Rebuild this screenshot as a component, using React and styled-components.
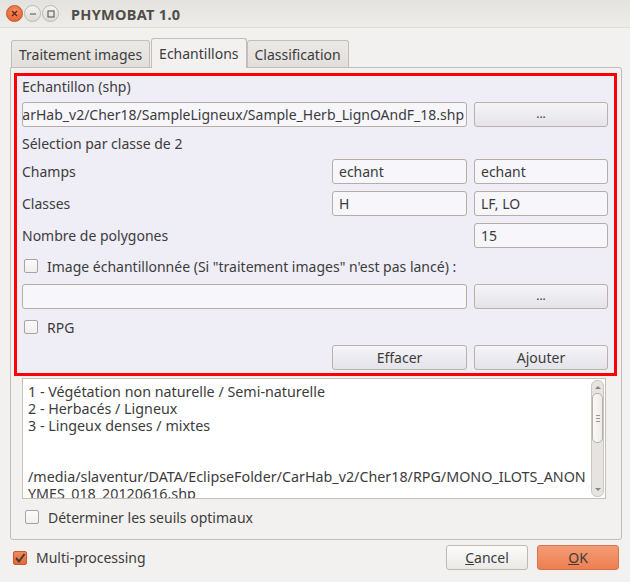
import styled, { createGlobalStyle, css } from "styled-components";

const Global = createGlobalStyle`
  html, body { margin: 0; padding: 0; background: #f2f1f0; }
  body { font-family: "Noto Sans", "DejaVu Sans", sans-serif; font-size: 14px; color: #3c3c3c; }
  * { box-sizing: border-box; }
`;

const Window = styled.div`
  width: 630px;
  height: 582px;
  background: #f2f1f0;
  display: flex;
  flex-direction: column;
  overflow: hidden;
`;

const TitleBar = styled.div`
  height: 28px;
  display: flex;
  align-items: center;
  padding-left: 6px;
  background: linear-gradient(#e4e2de, #eeedea);
  border-bottom: 1px solid #e0ded9;
`;

const WinButton = styled.div`
  width: 17px;
  height: 17px;
  border-radius: 50%;
  margin-right: 1px;
  display: flex;
  align-items: center;
  justify-content: center;
  ${(p) =>
    p.$close
      ? css`
          background: radial-gradient(circle at 50% 35%, #f59163, #e2582a);
          border: 1px solid #c65229;
        `
      : css`
          background: linear-gradient(#f4f3f1, #dedbd6);
          border: 1px solid #bdb8b0;
        `}
`;

const Title = styled.div`
  margin-left: 11px;
  font-weight: bold;
  font-size: 14.5px;
  color: #4f4d49;
  letter-spacing: 0.3px;
`;

const Body = styled.div`
  flex: 1;
  display: flex;
  flex-direction: column;
  padding: 9px 8px 0 10px;
`;

const TabRow = styled.div`
  display: flex;
  align-items: flex-end;
  height: 30px;
  padding-left: 1px;
`;

const Tab = styled.div`
  height: ${(p) => (p.$active ? 30 : 27)}px;
  padding: 0 7px;
  display: flex;
  align-items: center;
  border: 1px solid #c2bdb6;
  border-bottom: none;
  border-radius: 3px 3px 0 0;
  margin-right: ${(p) => (p.$active ? 0 : 1)}px;
  background: ${(p) => (p.$active ? "#f2f1f0" : "linear-gradient(#ebe9e6, #e2dfdb)")};
  position: relative;
  z-index: ${(p) => (p.$active ? 2 : 1)};
  margin-bottom: ${(p) => (p.$active ? -1 : 0)}px;
`;

const Pane = styled.div`
  height: 473px;
  border: 1px solid #c2bdb6;
  border-radius: 0 3px 3px 3px;
  display: flex;
  flex-direction: column;
  padding: 5px 4px 0 3px;
`;

const Group = styled.div`
  border: 3px solid #ff0000;
  background: #efeef6;
  padding: 1px 6px 3px 5px;
  display: grid;
  grid-template-columns: 1fr 135px 134px;
  column-gap: 7px;
  row-gap: 7px;
`;

const Label = styled.div`
  height: ${(p) => p.$h || 18}px;
  display: flex;
  align-items: center;
  grid-column: ${(p) => p.$span || "auto"};
  white-space: nowrap;
`;

const Field = styled.div`
  height: 25px;
  border: 1px solid #b4aea7;
  border-radius: 3px;
  background: #f6f6fb;
  display: flex;
  align-items: center;
  padding: 0 6px;
  overflow: hidden;
  white-space: nowrap;
  grid-column: ${(p) => p.$span || "auto"};
  ${(p) =>
    p.$end &&
    css`
      justify-content: flex-end;
      padding: 0 2px 0 0;
    `}
`;

const Button = styled.div`
  height: 25px;
  border: 1px solid #b8b2ab;
  border-radius: 3px;
  background: linear-gradient(#f5f4f8, #e4e3e9);
  display: flex;
  align-items: center;
  justify-content: center;
  grid-column: ${(p) => p.$col || "auto"};
  ${(p) =>
    p.$dots &&
    css`
      font-size: 12px;
      padding-bottom: 2px;
    `}
`;

const CheckRow = styled.div`
  height: ${(p) => p.$h || 22}px;
  display: flex;
  align-items: center;
  gap: 9px;
  padding-left: ${(p) => p.$pl ?? 2}px;
  grid-column: ${(p) => p.$span || "auto"};
  white-space: nowrap;
`;

const Box = styled.div`
  width: 14px;
  height: 14px;
  border: 1px solid #aaa49d;
  border-radius: 2px;
  background: linear-gradient(#fbfbfb, #f0efee);
  display: flex;
  align-items: center;
  justify-content: center;
  ${(p) =>
    p.$checked &&
    css`
      background: linear-gradient(#ef8a5d, #e2683a);
      border-color: #c65a31;
    `}
`;

const TextArea = styled.div`
  margin: 2px 11px 0 8px;
  height: 121px;
  border: 1px solid #c6c0b9;
  background: #fff;
  display: flex;
  overflow: hidden;
`;

const TextLines = styled.div`
  flex: 1;
  padding: 4px 4px 0 5px;
  line-height: 17px;
  font-size: 14.3px;
  white-space: pre;
  overflow: hidden;
`;

const Scroll = styled.div`
  width: 13px;
  margin: 1px 1px 1px 0;
  border: 1px solid #cbc6bf;
  border-radius: 6px;
  background: #e6e4e0;
  display: flex;
  flex-direction: column;
  align-items: center;
`;

const Arrow = styled.div`
  height: 12px;
  display: flex;
  align-items: center;
  justify-content: center;
`;

const Thumb = styled.div`
  width: 11px;
  height: 50px;
  border: 1px solid #b7b1a9;
  border-radius: 5px;
  background: linear-gradient(90deg, #faf9f8, #eeece9);
  display: flex;
  flex-direction: column;
  align-items: center;
  justify-content: center;
  gap: 2px;
`;

const Grip = styled.div`
  width: 4px;
  height: 1px;
  background: #9d978f;
`;

const Footer = styled.div`
  display: flex;
  align-items: center;
  padding: 5px 3px 0 3px;
`;

const FooterLabel = styled.span`
  margin-left: 9px;
  flex: 1;
`;

const DlgButton = styled.div`
  width: 82px;
  height: 25px;
  border-radius: 3px;
  display: flex;
  align-items: center;
  justify-content: center;
  margin-left: ${(p) => p.$ml || 0}px;
  ${(p) =>
    p.$primary
      ? css`
          background: linear-gradient(#f49c74, #ec7f51);
          border: 1px solid #d8744b;
        `
      : css`
          background: linear-gradient(#fbfbfa, #ebe9e6);
          border: 1px solid #bfb9b2;
        `}
`;

const Check = () => (
  <svg width="12" height="12" viewBox="0 0 12 12">
    <polyline points="2,6 5,9.5 10.5,2" fill="none" stroke="#4a3930" strokeWidth="2" />
  </svg>
);

const notes = [
  "1 - Végétation non naturelle / Semi-naturelle",
  "2 - Herbacés / Ligneux",
  "3 - Lingeux denses / mixtes",
  "",
  "",
  "/media/slaventur/DATA/EclipseFolder/CarHab_v2/Cher18/RPG/MONO_ILOTS_ANON",
  "YMES_018_20120616.shp",
];

export default function App() {
  return (
    <Window>
      <Global />
      <TitleBar>
        <WinButton $close>
          <svg width="7" height="7" viewBox="0 0 7 7">
            <path d="M1 1L6 6M6 1L1 6" stroke="#5a2410" strokeWidth="1.3" />
          </svg>
        </WinButton>
        <WinButton>
          <svg width="8" height="8" viewBox="0 0 8 8">
            <path d="M1 4H7" stroke="#5c5953" strokeWidth="1.1" />
          </svg>
        </WinButton>
        <WinButton>
          <svg width="8" height="8" viewBox="0 0 8 8">
            <rect x="1" y="1" width="6" height="6" fill="none" stroke="#5c5953" strokeWidth="1.1" />
          </svg>
        </WinButton>
        <Title>PHYMOBAT 1.0</Title>
      </TitleBar>

      <Body>
        <TabRow>
          <Tab>Traitement images</Tab>
          <Tab $active>Echantillons</Tab>
          <Tab>Classification</Tab>
        </TabRow>
        <Pane>
          <Group>
            <Label $span="1 / 4">Echantillon (shp)</Label>
            <Field $span="1 / 3" $end>
              /media/slaventur/DATA/EclipseFolder/CarHab_v2/Cher18/SampleLigneux/Sample_Herb_LignOAndF_18.shp
            </Field>
            <Button $dots>...</Button>
            <Label $span="1 / 4">Sélection par classe de 2</Label>
            <Label $h={25}>Champs</Label>
            <Field>echant</Field>
            <Field>echant</Field>
            <Label $h={25}>Classes</Label>
            <Field>H</Field>
            <Field>LF, LO</Field>
            <Label $h={25} $span="1 / 3">Nombre de polygones</Label>
            <Field>15</Field>
            <CheckRow $span="1 / 4">
              <Box />
              Image échantillonnée (Si "traitement images" n'est pas lancé) :
            </CheckRow>
            <Field $span="1 / 3" />
            <Button $dots>...</Button>
            <CheckRow $span="1 / 4">
              <Box />
              RPG
            </CheckRow>
            <Button $col="2">Effacer</Button>
            <Button>Ajouter</Button>
          </Group>

          <TextArea>
            <TextLines>{notes.join("\n")}</TextLines>
            <Scroll>
              <Arrow>
                <svg width="6" height="4" viewBox="0 0 6 4">
                  <path d="M0 4L3 1L6 4Z" fill="#8a847c" />
                </svg>
              </Arrow>
              <Thumb>
                <Grip />
                <Grip />
                <Grip />
              </Thumb>
              <div style={{ flex: 1 }} />
              <Arrow>
                <svg width="6" height="4" viewBox="0 0 6 4">
                  <path d="M0 0L3 3L6 0Z" fill="#8a847c" />
                </svg>
              </Arrow>
            </Scroll>
          </TextArea>

          <CheckRow $h={36} $pl={11}>
            <Box />
            Déterminer les seuils optimaux
          </CheckRow>
        </Pane>

        <Footer>
          <Box $checked>
            <Check />
          </Box>
          <FooterLabel>Multi-processing</FooterLabel>
          <DlgButton>
            <span>
              <u>C</u>ancel
            </span>
          </DlgButton>
          <DlgButton $primary $ml={9}>
            <span>
              <u>O</u>K
            </span>
          </DlgButton>
        </Footer>
      </Body>
    </Window>
  );
}
